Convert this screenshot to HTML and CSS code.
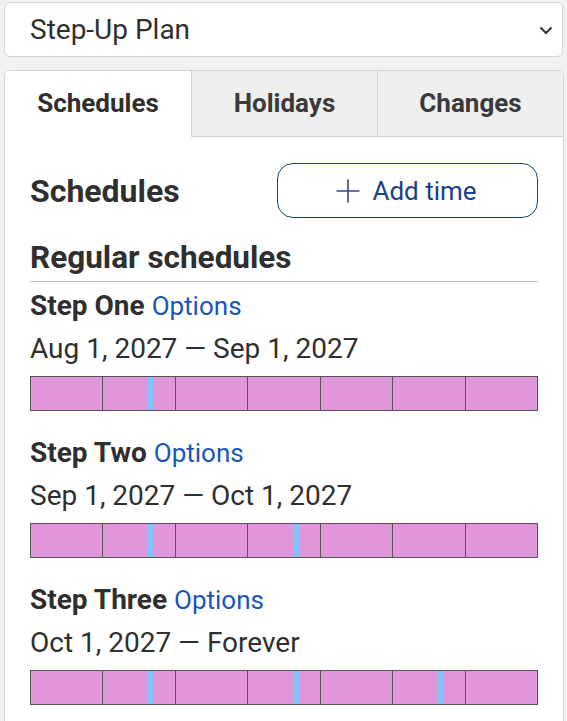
FILE: index.html
```html
<!DOCTYPE html>
<html lang="en">
<head>
<meta charset="utf-8">
<title>Step-Up Plan</title>
<link rel="stylesheet" href="styles.css">
</head>
<body>
<div class="page">
  <div class="select">
    <span class="select-text">Step-Up Plan</span>
    <svg class="chevron" width="14" height="9" viewBox="0 0 14 9"><path d="M1.5 1.5 L7 7 L12.5 1.5" fill="none" stroke="#333" stroke-width="2"/></svg>
  </div>
  <div class="card">
    <div class="tabs">
      <div class="tab active">Schedules</div>
      <div class="tab">Holidays</div>
      <div class="tab">Changes</div>
    </div>
    <div class="content">
      <div class="head-row">
        <h2 class="h2">Schedules</h2>
        <button class="add-btn">
          <svg width="24" height="24" viewBox="0 0 24 24"><path d="M12 0.5 V23.5 M0.5 12 H23.5" stroke="#3b3f8c" stroke-width="1.6" fill="none"/></svg>
          <span>Add time</span>
        </button>
      </div>
      <h3 class="h3">Regular schedules</h3>

      <div class="step">
        <div class="step-title"><b>Step One</b> <a class="link">Options</a></div>
        <div class="step-date">Aug 1, 2027 — Sep 1, 2027</div>
        <div class="bar">
          <div class="seg"></div>
          <div class="seg"><span class="mark"></span></div>
          <div class="seg"></div>
          <div class="seg"></div>
          <div class="seg"></div>
          <div class="seg"></div>
          <div class="seg"></div>
        </div>
      </div>

      <div class="step">
        <div class="step-title"><b>Step Two</b> <a class="link">Options</a></div>
        <div class="step-date">Sep 1, 2027 — Oct 1, 2027</div>
        <div class="bar">
          <div class="seg"></div>
          <div class="seg"><span class="mark"></span></div>
          <div class="seg"></div>
          <div class="seg"><span class="mark"></span></div>
          <div class="seg"></div>
          <div class="seg"></div>
          <div class="seg"></div>
        </div>
      </div>

      <div class="step">
        <div class="step-title"><b>Step Three</b> <a class="link">Options</a></div>
        <div class="step-date">Oct 1, 2027 — Forever</div>
        <div class="bar">
          <div class="seg"></div>
          <div class="seg"><span class="mark"></span></div>
          <div class="seg"></div>
          <div class="seg"><span class="mark"></span></div>
          <div class="seg"></div>
          <div class="seg"><span class="mark"></span></div>
          <div class="seg"></div>
        </div>
      </div>
    </div>
  </div>
</div>
</body>
</html>
```

FILE: styles.css
```css
* { box-sizing: border-box; }
html, body {
  margin: 0;
  background: #f0f1f3;
  font-family: Roboto, "Liberation Sans", sans-serif;
  color: #2f2f2f;
}
.page {
  padding: 2px 3px 0 4px;
  height: 721px;
  overflow: hidden;
}
.select {
  height: 55px;
  width: 559px;
  background: #fff;
  border: 1px solid #d8d8d8;
  border-radius: 6px;
  display: flex;
  align-items: center;
  justify-content: space-between;
  padding: 0 9px 0 25px;
}
.select-text {
  font-size: 28px;
  line-height: 34px;
}
.chevron { margin-top: 1px; }
.card {
  margin-top: 13px;
  background: #fff;
  border: 1px solid #d4d4d4;
  border-radius: 6px;
  overflow: hidden;
  min-height: 700px;
}
.tabs {
  display: grid;
  grid-template-columns: 1fr 1fr 1fr;
}
.tab {
  height: 66px;
  display: flex;
  align-items: center;
  justify-content: center;
  font-size: 26px;
  font-weight: 700;
  color: #3a3a3a;
  background: #efefef;
  border-left: 1px solid #d4d4d4;
  border-bottom: 1px solid #d4d4d4;
  padding-bottom: 1px;
}
.tab.active {
  background: #fff;
  border-left: none;
  border-bottom-color: #fff;
  color: #2f2f2f;
}
.content {
  padding: 26px 25px 0 25px;
}
.head-row {
  display: flex;
  align-items: center;
  justify-content: space-between;
}
.h2 {
  margin: 0;
  font-size: 32px;
  font-weight: 700;
  line-height: 34px;
}
.add-btn {
  width: 261px;
  height: 55px;
  background: #fff;
  border: 1.5px solid #14408f;
  border-radius: 16px;
  display: flex;
  align-items: center;
  justify-content: center;
  gap: 12px;
  font-family: inherit;
  font-size: 26px;
  color: #1b3f8b;
  padding: 0 2px 0 0;
}
.h3 {
  margin: 23px 0 0;
  font-size: 31.5px;
  font-weight: 700;
  line-height: 34px;
  padding-bottom: 6px;
  border-bottom: 1px solid #bdbdbd;
}
.step { margin-top: 27px; }
.h3 + .step { margin-top: 9px; }
.step-title {
  font-size: 28px;
  line-height: 30px;
}
.step-title b { font-weight: 700; }
.link {
  color: #1a55bb;
  font-size: 26px;
}
.step-date {
  margin-top: 13px;
  font-size: 28px;
  line-height: 30px;
}
.bar {
  margin-top: 12px;
  height: 35px;
  border: 1px solid #555;
  display: flex;
  background: #e195da;
}
.seg {
  flex: 1;
  position: relative;
  border-left: 1px solid #555;
}
.seg:first-child { border-left: none; }
.mark {
  position: absolute;
  top: 0;
  bottom: 0;
  left: 62%;
  width: 6px;
  background: #80c4ff;
}
```
